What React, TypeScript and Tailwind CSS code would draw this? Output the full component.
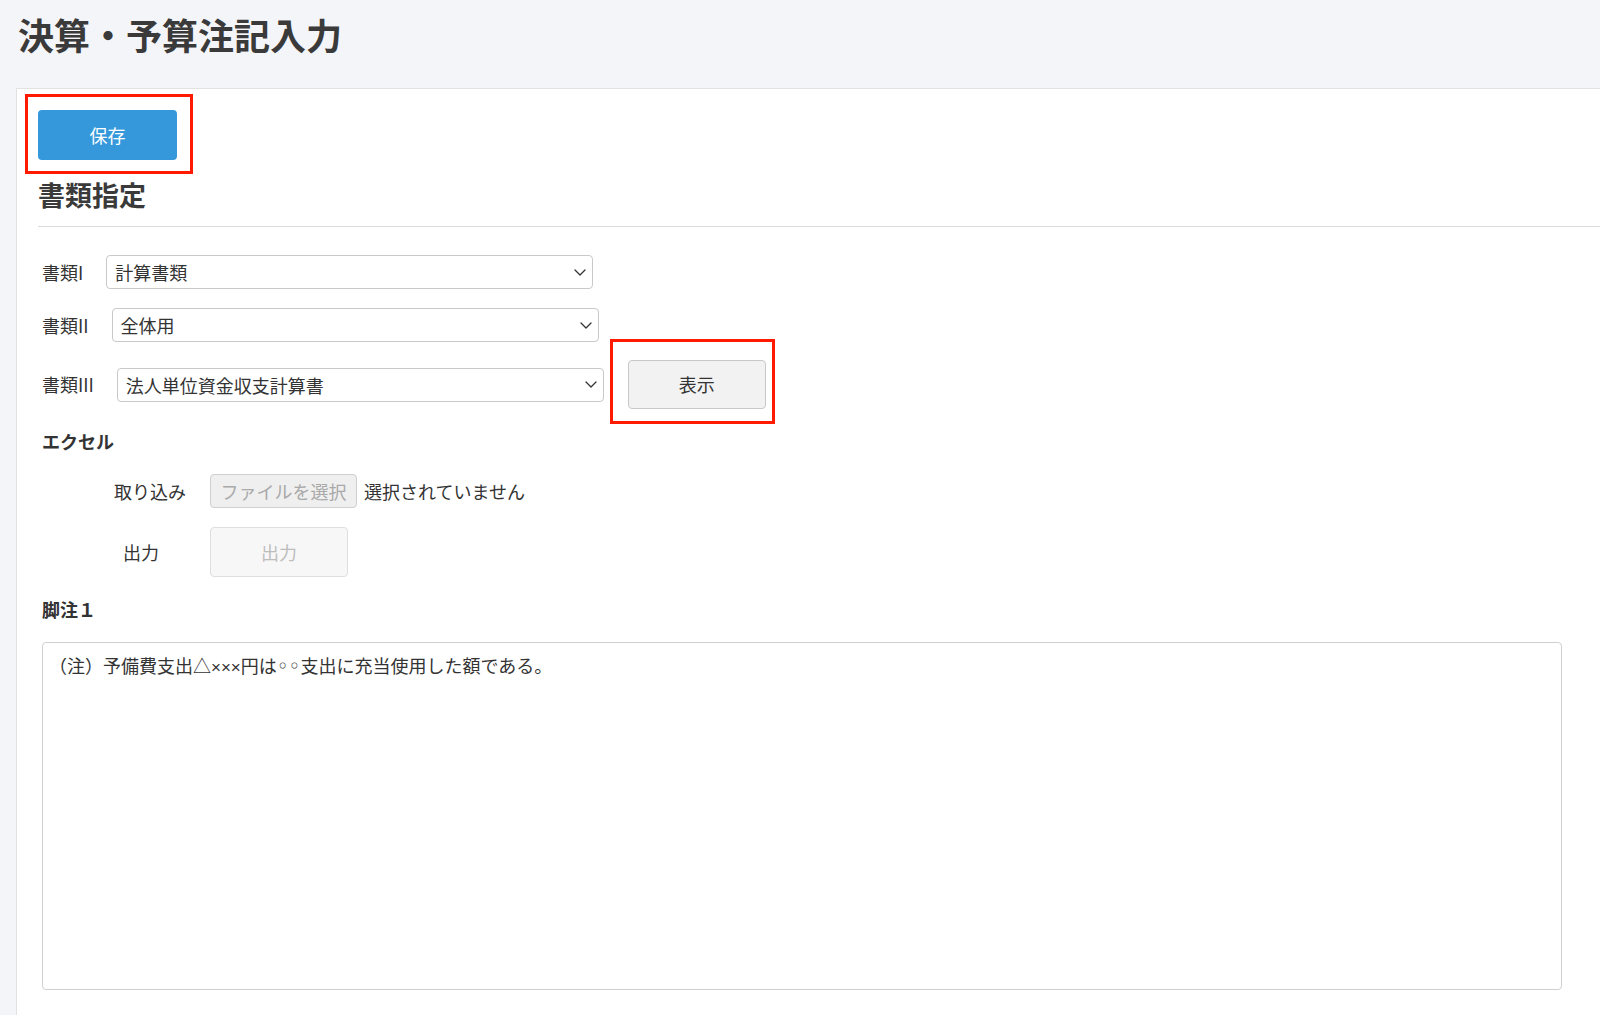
import React from 'react';

function Chevron() {
  return (
    <svg width="12" height="7" viewBox="0 0 12 7" fill="none" className="shrink-0">
      <path d="M1 1l5 5 5-5" stroke="#333" strokeWidth="1.3" strokeLinecap="round" strokeLinejoin="round" />
    </svg>
  );
}

function SelectBox({ value }: { value: string }) {
  return (
    <div className="flex h-[34px] w-[487px] items-center justify-between rounded-[4px] border border-[#c9c9c9] bg-white pl-[8px] pr-[6px]">
      <span className="text-[18px] leading-none text-[#333]">{value}</span>
      <Chevron />
    </div>
  );
}

export default function App() {
  return (
    <div className="min-h-screen bg-[#f4f5f8] font-['Noto_Sans_CJK_JP',sans-serif] text-[#333]">
      <h1 className="h-[88px] pl-[18px] pt-[12px] text-[36px] font-bold leading-[44px] text-[#3a3a3a]">
        決算・予算注記入力
      </h1>

      <div className="ml-[16px] min-h-[927px] border-l border-t border-[#e2e2e2] bg-white pl-[21px] pt-[21px] pb-[27px]">
        {/* save */}
        <div className="relative inline-block">
          <div className="absolute -left-[13px] -top-[16px] -right-[16px] -bottom-[14px] border-[3px] border-[#ff1a00]" />
          <button className="relative h-[50px] w-[139px] rounded-[4px] bg-[#3498db] text-[18px] text-white">
            保存
          </button>
        </div>

        <h2 className="mt-[16px] h-[38px] text-[27px] font-bold leading-[38px] text-[#3a3a3a]">書類指定</h2>
        <div className="mt-[12px] border-t border-[#dcdcdc]" />

        <div className="pl-[4px]">
          {/* document selects */}
          <div className="mt-[28px] flex h-[34px] items-center">
            <span className="mr-[23px] text-[18px] text-[#333]">書類I</span>
            <SelectBox value="計算書類" />
          </div>
          <div className="mt-[19px] flex h-[34px] items-center">
            <span className="mr-[23px] text-[18px] text-[#333]">書類II</span>
            <SelectBox value="全体用" />
          </div>
          <div className="mt-[18px] flex h-[49px] items-center">
            <span className="mr-[23px] text-[18px] text-[#333]">書類III</span>
            <SelectBox value="法人単位資金収支計算書" />
            <div className="relative ml-[24px]">
              <div className="absolute -left-[18px] -top-[21px] -right-[9px] -bottom-[15px] border-[3px] border-[#ff1a00]" />
              <button className="relative h-[49px] w-[138px] rounded-[4px] border border-[#c8c8c8] bg-[#f2f2f2] text-[18px] text-[#333]">
                表示
              </button>
            </div>
          </div>

          {/* excel */}
          <div className="mt-[19px] text-[18px] font-bold leading-[26px] text-[#333]">エクセル</div>
          <div className="mt-[20px] flex h-[34px] items-center">
            <div className="w-[168px] pl-[72px] text-[18px] text-[#333]">取り込み</div>
            <button className="h-[34px] w-[147px] rounded-[4px] border border-[#cfcfcf] bg-[#efefef] text-[18px] text-[#a9a9a9]">
              ファイルを選択
            </button>
            <span className="ml-[7px] text-[18px] text-[#333]">選択されていません</span>
          </div>
          <div className="mt-[19px] flex h-[50px] items-center">
            <div className="w-[168px] pl-[81px] text-[18px] text-[#333]">出力</div>
            <button className="h-[50px] w-[138px] rounded-[4px] border border-[#dedede] bg-[#f7f7f7] text-[18px] text-[#bdbdbd]">
              出力
            </button>
          </div>

          {/* footnote */}
          <div className="mt-[19px] text-[18px] font-bold leading-[26px] text-[#333]">脚注１</div>
          <div className="mt-[20px] h-[348px] w-[1520px] rounded-[4px] border border-[#cfcfcf] bg-white px-[6px] pt-[9px] text-[18px] leading-[26px] text-[#333]">
            （注）予備費支出△
            <span className="font-['Liberation_Sans',sans-serif] text-[17px]">×××</span>
            円は
            <span className="font-['DejaVu_Sans',sans-serif] text-[20px]">◦◦</span>
            支出に充当使用した額である。
          </div>
        </div>
      </div>
    </div>
  );
}
